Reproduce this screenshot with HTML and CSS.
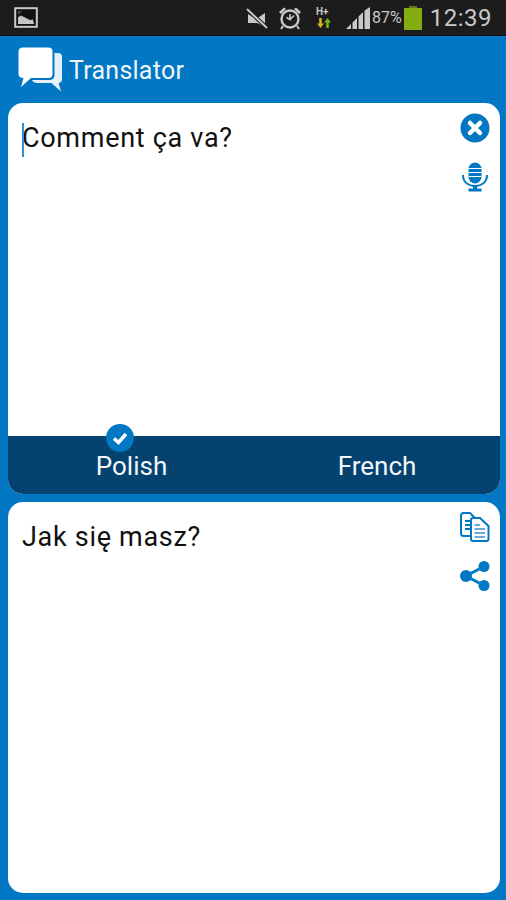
FILE: index.html
```html
<!DOCTYPE html>
<html lang="en">
<head>
    <meta charset="UTF-8">
    <meta name="viewport" content="width=device-width, initial-scale=1.0">
    <title>Translator</title>
    <link rel="stylesheet" href="styles.css">
</head>
<body>
    <div class="status-bar">
        <svg class="status-picture" width="24" height="21" viewBox="0 0 24 21">
            <rect x="1.2" y="1.2" width="21.6" height="18.6" fill="#111" stroke="#c8c8c8" stroke-width="2"/>
            <path d="M4 17V10.5L6.5 8.5L10 10L13 11.5L16 13L19 12.5L20 17Z" fill="#c4c4c4"/>
            <path d="M4 7L8 4.5H4Z" fill="#666"/>
        </svg>
        <div class="status-right">
            <svg class="status-mute" width="24" height="22" viewBox="0 0 24 22">
                <path d="M3 7L11 12L20 6V20L12 16H3Z" fill="#c8c8c8"/>
                <path d="M2 2L22 21" stroke="#1c1c1c" stroke-width="4"/>
                <path d="M2 2L22 21" stroke="#c8c8c8" stroke-width="2"/>
            </svg>
            <svg class="status-alarm" width="24" height="24" viewBox="0 0 24 24">
                <circle cx="12" cy="13" r="8.5" fill="none" stroke="#c8c8c8" stroke-width="2.4"/>
                <path d="M12 8V13.5L8.5 11.5M12 13.5L16 9.5" fill="none" stroke="#c8c8c8" stroke-width="1.6"/>
                <path d="M1 6L6 1.5L8 3L3 8ZM23 6L18 1.5L16 3L21 8Z" fill="#c8c8c8"/>
                <path d="M5 20L3 23M19 20L21 23" stroke="#c8c8c8" stroke-width="2"/>
            </svg>
            <div class="status-net">
                <span class="net-type">H+</span>
                <svg width="16" height="12" viewBox="0 0 16 12">
                    <path d="M4.5 11L1 6.5H3.2V1H5.8V6.5H8Z" fill="#d6b21e"/>
                    <path d="M11.5 1L15 5.5H12.8V11H10.2V5.5H8Z" fill="#7fae16"/>
                </svg>
            </div>
            <svg class="status-signal" width="26" height="24" viewBox="0 0 26 24">
                <path d="M1 23L6 18V23ZM7.500 23V16.500L12 12V23ZM13.500 23V10.500L18 6V23ZM19.500 23V4.500L25 1V23Z" fill="#c8c8c8"/>
            </svg>
            <span class="status-battery-text">87%</span>
            <div class="battery">
                <div class="battery-cap"></div>
                <div class="battery-body"></div>
            </div>
            <span class="status-time">12:39</span>
        </div>
    </div>

    <header class="app-header">
        <svg class="app-logo" width="46" height="46" viewBox="0 0 46 46">
            <path d="M36.500 6H40C42.500 6 44 7.500 44 10V32C44 34.500 42.500 36 40.500 36L43 44.500L33.500 36H19C16.500 36 15 35 14 33H31C34.500 33 36.500 31 36.500 28Z" fill="#e6f2fb"/>
            <path d="M5 0.500H30.500C33 0.500 34.500 2 34.500 4.500V27C34.500 29.500 33 31 30.500 31H13L3 40L5.500 31H5C2.500 31 0.500 29.500 0.500 27V4.500C0.500 2 2.500 0.500 5 0.500Z" fill="#fff"/>
        </svg>
        <span class="app-title">Translator</span>
    </header>

    <main class="content">
        <section class="card">
            <div class="card-body">
                <p class="text-line"><span class="cursor"></span>Comment ça va?</p>
                <div class="card-actions">
                    <svg width="30" height="30" viewBox="0 0 30 30">
                        <circle cx="15" cy="15" r="14.500" fill="#0277c3"/>
                        <path d="M10 10L20 20M20 10L10 20" stroke="#fff" stroke-width="4.500" stroke-linecap="round"/>
                    </svg>
                    <svg class="action-mic" width="28" height="30" viewBox="0 0 28 30">
                        <rect x="7.500" y="0.500" width="13" height="21" rx="6.500" fill="#0277c3"/>
                        <path d="M7.500 6.500H20.500M7.500 10.500H20.500M7.500 14.500H20.500" stroke="#fff" stroke-width="1"/>
                        <path d="M2 13C2 20 7 24 14 24C21 24 26 20 26 13" fill="none" stroke="#0277c3" stroke-width="2"/>
                        <rect x="12" y="23" width="4" height="4" fill="#0277c3"/>
                        <rect x="7.500" y="26.500" width="13" height="3" fill="#0277c3"/>
                    </svg>
                </div>
            </div>
            <div class="lang-bar">
                <div class="lang lang-selected">
                    <svg class="lang-check" width="28" height="28" viewBox="0 0 28 28">
                        <circle cx="14" cy="14" r="14" fill="#0277c3"/>
                        <path d="M8 14.500L12.500 18.500L20 10" fill="none" stroke="#fff" stroke-width="3.500"/>
                    </svg>
                    Polish
                </div>
                <div class="lang">French</div>
            </div>
        </section>

        <section class="card">
            <div class="card-body">
                <p class="text-line">Jak się masz?</p>
                <div class="card-actions">
                    <svg width="30" height="30" viewBox="0 0 30 30">
                        <path d="M10 24H3.500C2 24 1 23 1 21.500V4C1 2.500 2 1 3.500 1H10L16 7" fill="none" stroke="#0277c3" stroke-width="2"/>
                        <path d="M5 9H10M5 13H10M5 17H10" stroke="#0277c3" stroke-width="1.800"/>
                        <path d="M13 6H20L28.500 14V27C28.500 28 28 29 26.500 29H13C12 29 11 28 11 27V8C11 7 12 6 13 6Z" fill="#fff" stroke="#0277c3" stroke-width="2"/>
                        <path d="M14.500 13H20M14.500 17H25M14.500 21H25M14.500 25H25" stroke="#6aa9d8" stroke-width="2"/>
                    </svg>
                    <svg class="action-share" width="30" height="30" viewBox="0 0 30 30">
                        <path d="M24 5.500L6 15L24 24.500" fill="none" stroke="#0277c3" stroke-width="3"/>
                        <circle cx="24" cy="5.500" r="5.500" fill="#0277c3"/>
                        <circle cx="6" cy="15" r="6" fill="#0277c3"/>
                        <circle cx="24" cy="24.500" r="5.500" fill="#0277c3"/>
                    </svg>
                </div>
            </div>
        </section>
    </main>
</body>
</html>
```
FILE: styles.css
```css
html, body {
    margin: 0;
    padding: 0;
}

body {
    width: 506px;
    height: 900px;
    overflow: hidden;
    display: flex;
    flex-direction: column;
    background-color: #0277c3;
    font-family: Roboto, "Liberation Sans", sans-serif;
}

.status-bar {
    height: 35px;
    flex: none;
    display: flex;
    align-items: center;
    justify-content: space-between;
    padding: 0 14px;
    background-color: #1c1c1c;
    border-bottom: 1px solid #0d0d0d;
}

.status-right {
    display: flex;
    align-items: center;
    color: #c8c8c8;
}

.status-mute {
    margin-right: 9px;
}

.status-alarm {
    margin-right: 14px;
}

.status-net {
    width: 16px;
    display: flex;
    flex-direction: column;
    margin-right: 13px;
}

.net-type {
    font-size: 10px;
    line-height: 11px;
    font-weight: 700;
}

.status-battery-text {
    font-size: 16px;
    margin-left: 1px;
    margin-right: 2px;
}

.battery {
    width: 18px;
    display: flex;
    flex-direction: column;
    align-items: center;
    margin-right: 8px;
}

.battery-cap {
    width: 8px;
    height: 2px;
    background-color: #5c7a14;
}

.battery-body {
    width: 18px;
    height: 22px;
    background-color: #84ad12;
}

.status-time {
    font-size: 24px;
    line-height: 28px;
    letter-spacing: 0.5px;
}

.app-header {
    height: 67px;
    flex: none;
    display: flex;
    align-items: center;
    padding-left: 18px;
    box-sizing: border-box;
    padding-top: 1px;
}

.app-title {
    margin-left: 5px;
    color: #eef6fc;
    font-size: 25px;
    letter-spacing: 0.25px;
}

.content {
    flex: 1;
    display: flex;
    flex-direction: column;
    gap: 8px;
    padding: 0 6px 7px 8px;
    min-height: 0;
}

.card {
    flex: 1;
    min-height: 0;
    display: flex;
    flex-direction: column;
    background-color: #fff;
    border-radius: 15px;
    overflow: hidden;
}

.card-body {
    flex: 1;
    position: relative;
    padding: 20px 14px;
}

.text-line {
    margin: 0;
    position: relative;
    color: #111;
    font-size: 27px;
    line-height: 30px;
    letter-spacing: 0.7px;
}

.cursor {
    position: absolute;
    left: 0;
    top: 0;
    width: 2px;
    height: 34px;
    background-color: #2f8fd8;
}

.card-actions {
    position: absolute;
    top: 10px;
    right: 10px;
    display: flex;
    flex-direction: column;
    align-items: center;
    gap: 19px;
}

.lang-bar {
    height: 58px;
    flex: none;
    display: flex;
    background-color: #05426f;
}

.lang {
    position: relative;
    flex: none;
    width: 244px;
    text-align: center;
    color: #f2f6fa;
    font-size: 26px;
    line-height: 61px;
}

.lang-selected {
    width: 247px;
}

.lang-check {
    position: absolute;
    top: -12px;
    left: 98px;
}
```
